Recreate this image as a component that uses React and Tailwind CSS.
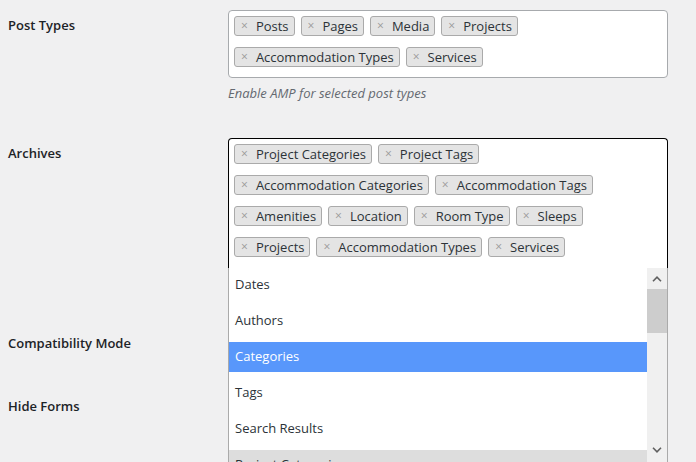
import React from 'react';

const postTypes = [['Posts', 'Pages', 'Media', 'Projects'], ['Accommodation Types', 'Services']];

const archives = [
  ['Project Categories', 'Project Tags'],
  ['Accommodation Categories', 'Accommodation Tags'],
  ['Amenities', 'Location', 'Room Type', 'Sleeps'],
  ['Projects', 'Accommodation Types', 'Services'],
];

const options = ['Dates', 'Authors', 'Categories', 'Tags', 'Search Results', 'Project Categories'];

function Tag({ label }) {
  return (
    <span className="flex h-[20px] items-center rounded-[3px] border border-[#aaaaaa] bg-[#e4e4e4] pl-[6px] pr-[5px] leading-none">
      <span className="text-[12px] text-[#999999]">×</span>
      <span className="ml-[8px] text-[#2c3338]">{label}</span>
    </span>
  );
}

function TagRows({ rows }) {
  return (
    <div className="flex flex-col gap-[11px]">
      {rows.map((row, i) => (
        <div key={i} className="flex gap-[6px]">
          {row.map((t) => (
            <Tag key={t} label={t} />
          ))}
        </div>
      ))}
    </div>
  );
}

function Chevron({ up }) {
  return (
    <svg width="10" height="6" viewBox="0 0 10 6" className="block">
      <path
        d={up ? 'M1 5.2 L5 1.2 L9 5.2' : 'M1 0.8 L5 4.8 L9 0.8'}
        fill="none"
        stroke="#606060"
        strokeWidth="1.6"
      />
    </svg>
  );
}

function Dropdown() {
  return (
    <div className="absolute left-0 top-full z-10 flex h-[194px] w-[440px] overflow-hidden border-x border-[#aaaaaa] bg-white">
      <div className="flex flex-1 flex-col gap-[6px] pt-[2px]">
        {options.map((o) => {
          let cls = 'text-[#2c3338]';
          if (o === 'Categories') cls = 'bg-[#5897fb] text-white';
          if (o === 'Project Categories') cls = 'bg-[#dddddd] text-[#2c3338]';
          return (
            <div key={o} className={`flex h-[30px] shrink-0 items-center pl-[6px] ${cls}`}>
              {o}
            </div>
          );
        })}
      </div>
      <div className="flex w-[20px] flex-col bg-[#f0f0f0]">
        <div className="flex h-[21px] items-center justify-center">
          <Chevron up />
        </div>
        <div className="h-[44px] bg-[#cdcdcd]" />
        <div className="flex-1" />
        <div className="flex h-[20px] items-start justify-center pt-[5px]">
          <Chevron />
        </div>
      </div>
    </div>
  );
}

export default function App() {
  return (
    <div
      className="h-[462px] overflow-hidden bg-[#f0f0f1] text-[13px] text-[#1d2327]"
      style={{ fontFamily: '"Open Sans", sans-serif' }}
    >
      <div className="flex pt-[10px]">
        <div className="w-[228px] pl-[8px] pt-[5px] font-semibold leading-[20px]">Post Types</div>
        <div className="w-[440px]">
          <div className="h-[68px] rounded-[4px] border border-[#a7aaad] bg-white px-[5px] pt-[5px]">
            <TagRows rows={postTypes} />
          </div>
          <p className="mt-[5px] leading-[20px] italic text-[#646970]">Enable AMP for selected post types</p>
        </div>
      </div>

      <div className="mt-[35px] flex">
        <div className="w-[228px] pl-[8px] pt-[5px] font-semibold leading-[20px]">Archives</div>
        <div className="relative w-[440px]">
          <div className="h-[130px] rounded-t-[4px] border border-b-0 border-black bg-white px-[5px] pt-[5px]">
            <TagRows rows={archives} />
          </div>
          <Dropdown />
        </div>
      </div>

      <div className="mt-[60px] flex">
        <div className="w-[228px] pl-[8px] pt-[5px] font-semibold leading-[20px]">Compatibility Mode</div>
      </div>

      <div className="mt-[38px] flex">
        <div className="w-[228px] pl-[8px] pt-[5px] font-semibold leading-[20px]">Hide Forms</div>
      </div>
    </div>
  );
}
